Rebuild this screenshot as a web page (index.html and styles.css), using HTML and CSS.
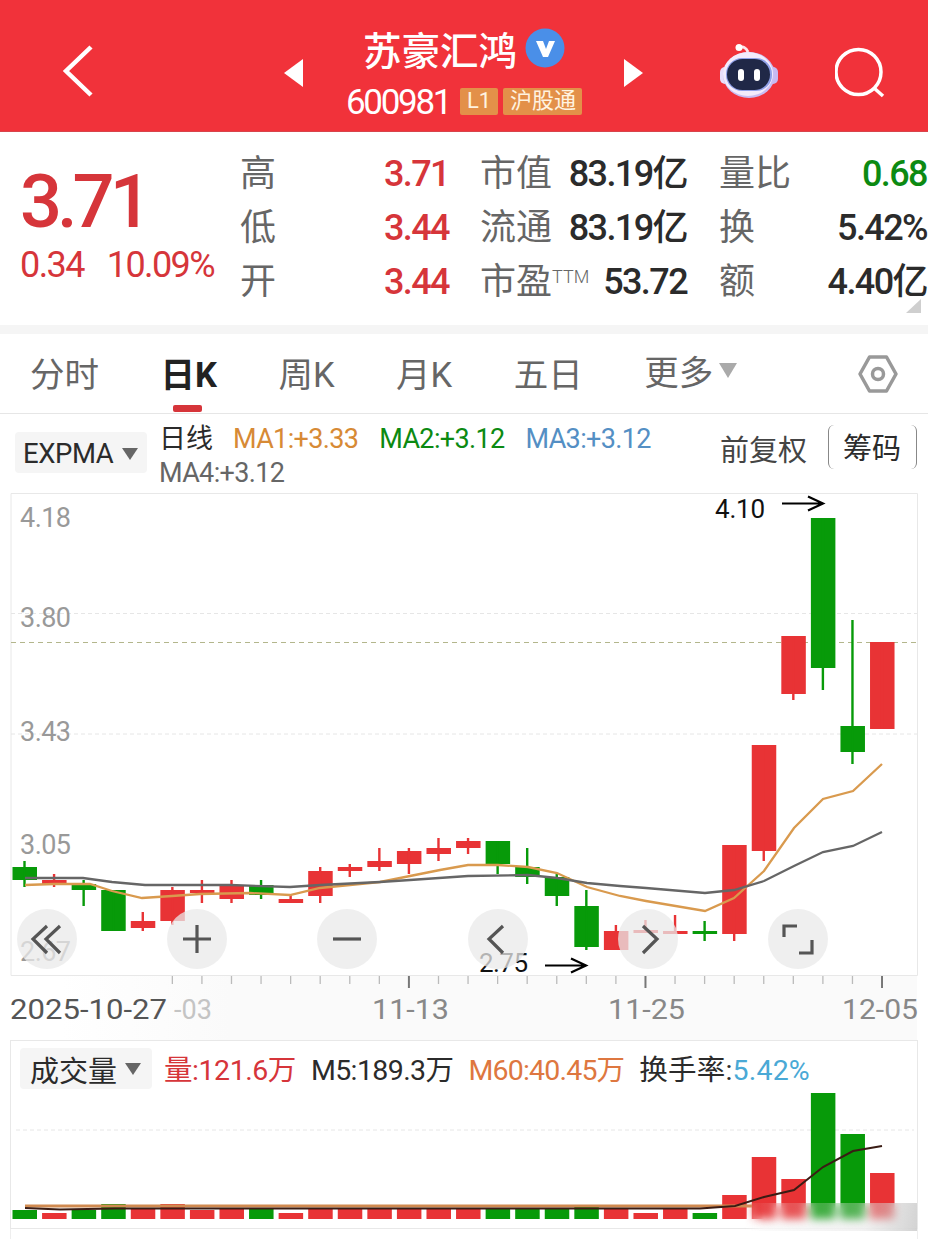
FILE: index.html
```html
<!DOCTYPE html>
<html lang="zh-CN">
<head>
    <meta charset="UTF-8">
    <meta name="viewport" content="width=device-width, initial-scale=1.0">
    <title>苏豪汇鸿 600981</title>
    <link rel="stylesheet" href="styles.css">
</head>
<body>
    <header class="header">
        <svg class="back" width="34" height="56" viewBox="0 0 34 56"><path d="M30 4 5 28l25 24"/></svg>
        <svg class="prev" width="20" height="30" viewBox="0 0 20 30"><path d="M20 1v28L1 15z"/></svg>
        <div class="title">
            <div class="name">
                <span>苏豪汇鸿</span>
                <svg width="40" height="40" viewBox="0 0 40 40"><circle cx="20" cy="20" r="19.5"/><path d="M11 13h7l3 8 3-8h6l-7 16h-5z"/></svg>
            </div>
            <div class="code">
                <span class="code-num">600981</span>
                <span class="tag tag-level">L1</span>
                <span class="tag">沪股通</span>
            </div>
        </div>
        <svg class="next" width="20" height="30" viewBox="0 0 20 30"><path d="M0 1v28l19-14z"/></svg>
        <svg class="robot" width="60" height="56" viewBox="0 0 60 56">
            <path d="M20 5q6-3 9 4" fill="none" stroke="#fde3ea" stroke-width="3"/>
            <circle cx="20" cy="4.500" r="3.500" fill="#fff"/>
            <rect x="1" y="24" width="10" height="17" rx="5" fill="#e9defa"/>
            <rect x="49" y="24" width="10" height="17" rx="5" fill="#c7b9f2"/>
            <ellipse cx="30" cy="32" rx="26" ry="23" fill="#c9bdf3"/>
            <ellipse cx="29" cy="31" rx="25" ry="22" fill="#f3ebfc"/>
            <rect x="7" y="15" width="46" height="33" rx="16" fill="#8fa0e8"/>
            <rect x="8" y="16" width="43" height="31" rx="15.500" fill="#202847"/>
            <rect x="19" y="26" width="6" height="12" rx="3" fill="#fff"/>
            <rect x="35" y="26" width="6" height="12" rx="3" fill="#fff"/>
        </svg>
        <svg class="search" width="52" height="52" viewBox="0 0 52 52"><circle cx="23.500" cy="25" r="22.500"/><path d="M39 41l9 8"/></svg>
    </header>

    <section class="quote">
        <div class="price-box">
            <div class="price">3.71</div>
            <div class="change"><span>0.34</span><span>10.09%</span></div>
        </div>
        <dl class="stats stats-range">
            <div><dt>高</dt><dd class="up">3.71</dd></div>
            <div><dt>低</dt><dd class="up">3.44</dd></div>
            <div><dt>开</dt><dd class="up">3.44</dd></div>
        </dl>
        <dl class="stats stats-cap">
            <div><dt>市值</dt><dd>83.19亿</dd></div>
            <div><dt>流通</dt><dd>83.19亿</dd></div>
            <div><dt>市盈<sup>TTM</sup></dt><dd>53.72</dd></div>
        </dl>
        <dl class="stats stats-volume">
            <div><dt>量比</dt><dd class="down">0.68</dd></div>
            <div><dt>换</dt><dd>5.42%</dd></div>
            <div><dt>额</dt><dd>4.40亿</dd></div>
        </dl>
        <i class="corner"></i>
    </section>

    <nav class="tabs">
        <a>分时</a>
        <a class="active">日K</a>
        <a>周K</a>
        <a>月K</a>
        <a>五日</a>
        <a class="more">更多<i class="caret"></i></a>
        <svg class="settings" width="42" height="40" viewBox="0 0 42 40"><path d="M12.500 3h17l9.500 17-9.500 17h-17L3 20z"/><circle cx="21" cy="20" r="5.500"/></svg>
    </nav>

    <section class="indicators">
        <button class="picker">EXPMA<i class="caret"></i></button>
        <div class="averages">
            <span class="period">日线</span><span class="ma1">MA1:+3.33</span><span class="ma2">MA2:+3.12</span><span class="ma3">MA3:+3.12</span>
            <span class="ma4">MA4:+3.12</span>
        </div>
        <span class="adjust">前复权</span>
        <span class="chips">筹码</span>
    </section>

    <section class="kline">
        <svg width="928" height="548" viewBox="0 492 928 548">
            <defs>
                <linearGradient id="axisFade">
                    <stop offset="0" stop-color="#fafafa" stop-opacity="0"/>
                    <stop offset="0.200" stop-color="#fafafa"/>
                </linearGradient>
            </defs>
            <rect x="60" y="976" width="857" height="64" fill="url(#axisFade)"/>
            <path class="frame" d="M11 493.500H917.500V975.500H11z"/>
            <path class="grid" d="M11 613.500H917M11 734H917"/>
            <path class="last-price" d="M11 642.500H917"/>
            <g class="scale">
                <text x="20" y="527" textLength="51">4.18</text>
                <text x="20" y="627" textLength="51">3.80</text>
                <text x="20" y="741" textLength="51">3.43</text>
                <text x="20" y="854" textLength="51">3.05</text>
                <text x="20" y="961" textLength="51">2.67</text>
            </g>
            <g id="candles"></g>
            <polyline class="line-fast" points="25,885 54,884 90,884 112,891 142,898 172,896 200,894 250,893 290,895 320,888 380,882 410,876 440,870 468,865 498,865 528,867 557,873 587,887 620,896 646,901 705,911 734,898 764,871 794,828 823,799 853,791 882,764"/>
            <polyline class="line-slow" points="25,878 83,878 112,882 145,885 230,885 290,887 320,885 380,882 410,880 468,876 528,875 557,878 587,883 620,886 646,888 705,893 734,890 764,881 794,866 823,852 853,846 882,832"/>
            <g class="marks">
                <text x="715" y="518" textLength="50">4.10</text>
                <path d="M782 503.500h40M808 496.500l15 7-15 7"/>
                <text x="479" y="972" textLength="49">2.75</text>
                <path d="M545 965.500h41M571 958.500l15 7-15 7"/>
            </g>
            <g id="ticks"></g>
            <g class="dates">
                <text class="date-first" x="10" y="1019" textLength="157" lengthAdjust="spacingAndGlyphs">2025-10-27</text>
                <text class="date-faded" x="174" y="1019" textLength="38">-03</text>
                <text x="372" y="1019" textLength="77" lengthAdjust="spacingAndGlyphs">11-13</text>
                <text x="608" y="1019" textLength="77" lengthAdjust="spacingAndGlyphs">11-25</text>
                <text x="842" y="1019" textLength="76" lengthAdjust="spacingAndGlyphs">12-05</text>
            </g>
        </svg>
        <div class="controls">
            <button><svg width="60" height="60"><path d="M30 17 16 30l14 14M43 17 29 30l14 14"/></svg></button>
            <button><svg width="60" height="60"><path d="M16 30h28M30 16v28"/></svg></button>
            <button><svg width="60" height="60"><path d="M16 30h28"/></svg></button>
            <button><svg width="60" height="60"><path d="M35 17 21 30l14 14"/></svg></button>
            <button><svg width="60" height="60"><path d="M25 17l14 13-14 14"/></svg></button>
            <button><svg width="60" height="60"><path d="M16 28V17h13M44 31v13H31"/></svg></button>
        </div>
    </section>

    <section class="volume">
        <div class="volume-legend">
            <button class="picker">成交量<i class="caret"></i></button>
            <span class="vol-now">量:121.6万</span>
            <span class="vol-m5">M5:189.3万</span>
            <span class="vol-m60">M60:40.45万</span>
            <span class="turnover">换手率:<b>5.42%</b></span>
        </div>
        <svg width="906" height="139" viewBox="11 1090 906 139">
            <path class="grid" d="M16 1130H914"/>
            <g id="bars"></g>
            <path class="line-m60" d="M25 1206H752"/>
            <path class="line-m5" d="M25 1208 60 1209.500 115 1208.500H700L735 1206 764 1197 794 1190 823 1167 853 1151 882 1146"/>
        </svg>
        <div class="haze"></div>
    </section>
    <div class="next-panel"></div>
    <script src="chart.js"></script>
</body>
</html>
```
FILE: styles.css
```css
body {
    margin: 0;
    width: 928px;
    height: 1239px;
    overflow: hidden;
    background-color: #fff;
    color: #2b2b2b;
    font-family: Roboto, "Noto Sans CJK SC", sans-serif;
}
button {
    border: none;
    padding: 0;
    font-family: inherit;
    color: inherit;
}
svg {
    display: block;
    flex: none;
}
.header {
    display: flex;
    align-items: center;
    height: 131px;
    background-color: #f1323a;
    border-bottom: 1px solid #d8444c;
    color: #fff;
    fill: #fff;
}
.back {
    margin: 10px 0 0 61px;
    fill: none;
    stroke: #fff;
    stroke-width: 4.500;
}
.prev {
    margin: 14px 0 0 188px;
}
.title {
    width: 236px;
    margin-left: 43px;
}
.name {
    display: flex;
    align-items: center;
    height: 50px;
    margin-top: 21px;
    padding-left: 17px;
    font-size: 38.500px;
    font-weight: 500;
}
.name svg {
    margin: 0 0 0 8px;
}
.name circle {
    fill: #4a8fe8;
}
.code {
    display: flex;
    align-items: center;
    height: 57px;
}
.code-num {
    width: 114px;
    padding-top: 3px;
    font-size: 35px;
    letter-spacing: -2.300px;
}
.tag {
    height: 27px;
    line-height: 26px;
    padding: 0 6px 0 7px;
    border-radius: 2px;
    background-color: #e39049;
    color: #fff3e0;
    font-size: 22px;
}
.tag-level {
    width: 26px;
    padding: 0 6px;
    margin-right: 5px;
    text-align: center;
}
.next {
    margin: 14px 0 0 42px;
}
.robot {
    margin: 10px 0 0 75px;
}
.search {
    margin: 14px 0 0 56px;
    fill: none;
    stroke: #fff;
    stroke-width: 3.500;
}
.quote {
    position: relative;
    display: flex;
    height: 193px;
    border-bottom: 9px solid #f5f5f5;
}
.price-box {
    width: 240px;
    color: #d6353a;
}
.price {
    margin: 32px 0 0 20px;
    height: 76px;
    line-height: 75px;
    font-size: 74px;
    font-weight: 500;
    letter-spacing: -5px;
}
.change {
    display: flex;
    gap: 23px;
    margin-left: 20px;
    font-size: 36px;
    line-height: 50px;
    letter-spacing: -1.600px;
}
.stats {
    margin: 14px 0 0;
}
.stats div {
    display: flex;
    justify-content: space-between;
    height: 54px;
    line-height: 56px;
    font-size: 36px;
    white-space: nowrap;
}
.stats dt {
    color: #666;
}
.stats dd {
    margin: 0 1px 0 0;
    font-weight: 500;
    letter-spacing: -1.600px;
}
.stats sup {
    font-size: 18px;
    font-weight: 300;
    line-height: 0;
    vertical-align: 11px;
}
.stats-range {
    width: 210px;
}
.stats-cap {
    width: 208px;
    margin-left: 30px;
}
.stats-volume {
    width: 209px;
    margin-left: 31px;
}
.stats .up {
    color: #d6353a;
}
.stats .down {
    color: #0c8a12;
}
.corner {
    position: absolute;
    right: 7px;
    bottom: 12px;
    border-left: 15px solid transparent;
    border-bottom: 14px solid #cfcfcf;
}
.tabs {
    display: flex;
    align-items: center;
    height: 79px;
    padding: 0 29px 0 30px;
    border-bottom: 1px solid #e6e6e6;
    font-size: 34.500px;
    line-height: 83px;
    color: #666;
}
.tabs a {
    height: 79px;
    margin-right: 61.500px;
}
.tabs .active {
    position: relative;
    color: #222;
    font-weight: 700;
}
.tabs .active::after {
    content: "";
    position: absolute;
    left: 12px;
    bottom: 1px;
    width: 29px;
    height: 7px;
    border-radius: 2px;
    background-color: #d6353a;
}
.caret {
    display: inline-block;
    border: 8px solid transparent;
    border-top: 12px solid #666;
    border-bottom: none;
}
.tabs .more {
    display: flex;
    align-items: center;
    height: 83px;
    margin-right: auto;
}
.more .caret {
    margin: -6px 0 0 6px;
    border-width: 15px 9px 0;
    border-top-color: #aaa;
}
.settings {
    fill: none;
    stroke: #999;
    stroke-width: 3.500;
    stroke-linejoin: round;
}
.indicators {
    display: flex;
    height: 78px;
}
.picker {
    display: flex;
    align-items: center;
    justify-content: space-between;
    box-sizing: border-box;
    width: 132px;
    height: 41px;
    border-radius: 4px;
    background-color: #f5f5f5;
    font-size: 27.500px;
}
.indicators .picker {
    margin: 18px 0 0 15px;
    padding: 2px 9px 0 8px;
    letter-spacing: -0.400px;
}
.averages {
    width: 540px;
    margin: 8px 0 0 12px;
    font-size: 27px;
    line-height: 34px;
    letter-spacing: -0.650px;
}
.averages span {
    margin-right: 21px;
}
.averages .ma4 {
    display: block;
}
.averages .period {
    margin-right: 20px;
    letter-spacing: 0;
}
.ma1 {
    color: #d78a35;
}
.ma2 {
    color: #0c8a12;
}
.ma3 {
    color: #548fc4;
}
.ma4 {
    color: #666;
}
.adjust {
    margin: 16px 0 0 21px;
    font-size: 29px;
    line-height: 42px;
    color: #444;
}
.chips {
    height: 44px;
    margin: 11px 0 0 21px;
    padding: 0 15px 0 14px;
    border: 1px solid #888;
    border-width: 0 1px;
    border-radius: 6px;
    font-size: 29px;
    line-height: 49px;
}
.kline {
    position: relative;
    height: 548px;
}
.frame {
    fill: none;
    stroke: #e8e8e8;
}
.grid {
    fill: none;
    stroke: #e6e6e6;
    stroke-dasharray: 4 3;
}
.last-price {
    stroke: #b3b68c;
    stroke-dasharray: 5 4;
}
.scale {
    font-size: 27px;
    fill: #999;
}
.up-fill {
    fill: #e83335;
}
.down-fill {
    fill: #079a09;
}
.line-fast,
.line-slow {
    fill: none;
    stroke: #d99a4e;
    stroke-width: 2.300;
}
.line-slow {
    stroke: #666;
}
.marks {
    font-size: 26px;
    fill: #111;
}
.marks path {
    fill: none;
    stroke: #000;
    stroke-width: 2.200;
}
.tick {
    stroke: #bbb;
    stroke-width: 1.300;
}
.tick-major {
    stroke: #777;
    stroke-width: 2;
}
.dates {
    font-size: 27px;
    fill: #888;
}
.dates .date-first {
    fill: #555;
}
.dates .date-faded {
    fill: #c4c4c4;
}
.controls {
    position: absolute;
    top: 417px;
    left: 17px;
    display: flex;
    gap: 90.200px;
}
.controls button {
    width: 60px;
    height: 60px;
    border-radius: 50%;
    background-color: rgba(234, 234, 234, 0.75);
}
.controls svg {
    fill: none;
    stroke: #555;
    stroke-width: 3.200;
}
.volume {
    position: relative;
    width: 906px;
    height: 187px;
    margin-left: 11px;
    border: 1px solid #e8e8e8;
    border-width: 1px 1px 1px 0;
    box-shadow: -1px 0 0 #e8e8e8;
}
.volume-legend {
    display: flex;
    align-items: center;
    height: 43px;
    padding: 6px 0 0 9px;
    font-size: 28.500px;
    letter-spacing: -0.450px;
    white-space: nowrap;
}
.volume-legend .picker {
    padding: 0 11px 0 10px;
    margin-right: 12px;
    font-size: 29px;
}
.volume-legend span {
    margin: -2px 15px 0 0;
}
.volume-legend .vol-m5 {
    letter-spacing: -0.600px;
}
.volume-legend .turnover {
    letter-spacing: 0.200px;
}
.volume-legend b {
    font-weight: 400;
    color: #4aa9d6;
}
.volume-legend .vol-now {
    color: #d6353a;
}
.volume-legend .vol-m60 {
    color: #de7740;
    letter-spacing: -0.800px;
}
.line-m60,
.line-m5 {
    fill: none;
    stroke: #d08a50;
    stroke-width: 3;
}
.line-m5 {
    stroke: #3a1c14;
    stroke-width: 2;
}
.haze {
    position: absolute;
    right: 0;
    bottom: -3px;
    width: 173px;
    height: 28px;
    background: linear-gradient(100deg, rgba(255, 255, 255, 0.050), rgba(225, 225, 225, 0.400) 70%, rgba(200, 200, 200, 0.800));
    backdrop-filter: blur(4px);
    mask-image: linear-gradient(90deg, transparent, #000 20px);
}
.next-panel {
    width: 906px;
    height: 10px;
    margin-left: 10px;
    border: 1px solid #eee;
    border-width: 0 1px;
}
```
FILE: chart.js
```js
// [direction, body top, body bottom, wick top, wick bottom, volume top]
const days = [
    ['down', 867, 880, 861, 887, 1210],
    ['up', 880, 885, 874, 887, 1213],
    ['down', 884, 890, 880, 906, 1210],
    ['down', 890, 931, 890, 931, 1204],
    ['up', 921, 928, 912, 931, 1209],
    ['up', 890, 921, 887, 925, 1204],
    ['up', 890, 893, 880, 903, 1210],
    ['up', 885, 899, 880, 903, 1209],
    ['down', 885, 895, 880, 899, 1208],
    ['up', 899, 903, 895, 903, 1213],
    ['up', 871, 896, 867, 903, 1208],
    ['up', 867, 871, 864, 877, 1208],
    ['up', 861, 867, 848, 871, 1208],
    ['up', 851, 864, 848, 874, 1208],
    ['up', 848, 854, 838, 861, 1208],
    ['up', 841, 848, 838, 854, 1208],
    ['down', 841, 864, 841, 874, 1209],
    ['down', 867, 877, 848, 884, 1209],
    ['down', 877, 896, 873, 906, 1209],
    ['down', 906, 947, 890, 950, 1205],
    ['up', 931, 950, 925, 950, 1209],
    ['up', 930, 933, 920, 933, 1213],
    ['up', 931, 934, 915, 934, 1209],
    ['down', 931, 934, 921, 941, 1213],
    ['up', 845, 934, 845, 941, 1195],
    ['up', 745, 851, 745, 861, 1157],
    ['up', 636, 694, 636, 700, 1179],
    ['down', 518, 668, 518, 690, 1093],
    ['down', 726, 752, 620, 764, 1134],
    ['up', 642, 729, 642, 729, 1173]
];

const rect = (cls, x, y, w, h) => `<rect class="${cls}-fill" x="${x}" y="${y}" width="${w}" height="${h}"/>`;
let candles = '';
let bars = '';
let ticks = '';

days.forEach(([dir, top, bottom, high, low, vol], i) => {
    const x = 24.5 + i * 29.57;
    candles += rect(dir, x - 12, top, 24.5, bottom - top) + rect(dir, x - 1.2, high, 2.4, low - high);
    bars += rect(dir, x - 12, vol, 24.5, 1219 - vol);
    if (i >= 5) {
        const major = i % 8 === 5 && i > 5;
        ticks += `<path class="tick${major ? ' tick-major' : ''}" d="M${x} 976v${major ? 12 : 8}"/>`;
    }
});

document.getElementById('candles').innerHTML = candles;
document.getElementById('bars').innerHTML = bars;
document.getElementById('ticks').innerHTML = ticks;
```
